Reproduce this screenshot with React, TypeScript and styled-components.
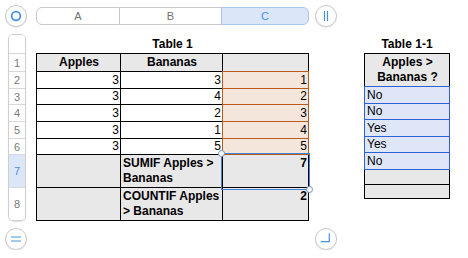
import React from "react";
import styled, { createGlobalStyle, css } from "styled-components";

const GlobalStyle = createGlobalStyle`
  body {
    margin: 0;
    background: #ffffff;
    font-family: "Liberation Sans", Arial, sans-serif;
    color: #000000;
  }
`;

const colors = {
  line: "#000000",
  head: "#e8e8e8",
  orangeFill: "#f5e6dc",
  orangeLine: "#b85a1e",
  blueFill: "#dee6f7",
  blueLine: "#2b62d3",
  select: "#3d84d8",
  chrome: "#c9c9c9",
  chromeText: "#707070",
  chromeBlue: "#4a90e2",
  chromeBlueFill: "#dbe7f9",
};

const Sheet = styled.div`
  display: grid;
  grid-template-columns: 22px 9px 273px 6px 22px 27px 86px;
  grid-template-rows: 22px 7px 187px 7px 22px;
  grid-template-areas:
    "tl . cols . tr . ."
    ". . . . . . ."
    "rows . t1 . . . t2"
    ". . . . . . ."
    "bl . . . br . .";
  padding: 5px 0 0 5px;
`;

const RoundButton = styled.div<{ $area: string }>`
  grid-area: ${(p) => p.$area};
  width: 22px;
  height: 22px;
  box-sizing: border-box;
  border: 1px solid ${colors.chrome};
  border-radius: 50%;
  background: #ffffff;
  box-shadow: 0 1px 1px rgba(0, 0, 0, 0.08);
  display: flex;
  align-items: center;
  justify-content: center;

  svg {
    display: block;
  }
`;

const ColumnBar = styled.div`
  grid-area: cols;
  align-self: start;
  margin-top: 2px;
  height: 18px;
  display: flex;
  font-size: 11px;
`;

const ColumnTab = styled.div<{ $width?: number; $pos: "first" | "mid" | "last"; $active?: boolean }>`
  box-sizing: border-box;
  height: 18px;
  flex: ${(p) => (p.$width ? `0 0 ${p.$width}px` : "1 1 auto")};
  display: flex;
  align-items: center;
  justify-content: center;
  color: ${colors.chromeText};
  background: #ffffff;
  border: 1px solid ${colors.chrome};
  ${(p) =>
    p.$pos === "first" &&
    css`
      border-radius: 6px 0 0 6px;
    `}
  ${(p) =>
    p.$pos === "mid" &&
    css`
      border-left: none;
    `}
  ${(p) =>
    p.$pos === "last" &&
    css`
      margin-left: -1px;
      border-radius: 0 6px 6px 0;
    `}
  ${(p) =>
    p.$active &&
    css`
      color: ${colors.chromeBlue};
      background: ${colors.chromeBlueFill};
      border-color: #a8c5ec;
    `}
`;

const RowHeader = styled.div`
  grid-area: rows;
  align-self: start;
  justify-self: start;
  margin-left: 3px;
  width: 18px;
  box-sizing: border-box;
  border: 1px solid #cfcfcf;
  border-radius: 5px;
  overflow: hidden;
  box-shadow: 0 1px 1px rgba(0, 0, 0, 0.12);
  display: flex;
  flex-direction: column;
  font-size: 11px;
`;

const RowLabel = styled.div<{ $h: number; $active?: boolean; $last?: boolean }>`
  box-sizing: border-box;
  height: ${(p) => p.$h}px;
  display: flex;
  align-items: center;
  justify-content: center;
  color: ${(p) => (p.$active ? colors.chromeBlue : "#7a7a7a")};
  background: ${(p) => (p.$active ? colors.chromeBlueFill : "#ffffff")};
  border-bottom: ${(p) => (p.$last ? "none" : "1px solid #d8d8d8")};
`;

const TableBlock = styled.div<{ $area: string }>`
  grid-area: ${(p) => p.$area};
  display: flex;
  flex-direction: column;
`;

const TableTitle = styled.div`
  height: 19px;
  line-height: 21px;
  text-align: center;
  font-size: 12px;
  font-weight: bold;
`;

const Grid = styled.div<{ $cols: string; $rows: string }>`
  position: relative;
  display: grid;
  grid-template-columns: ${(p) => p.$cols};
  grid-template-rows: ${(p) => p.$rows};
  padding: 1px 0 0 1px;
  font-size: 12px;
`;

type Tone = "plain" | "head" | "orange" | "blue";

const toneFill: Record<Tone, string> = {
  plain: "#ffffff",
  head: colors.head,
  orange: colors.orangeFill,
  blue: colors.blueFill,
};

const toneLine: Record<Tone, string> = {
  plain: colors.line,
  head: colors.line,
  orange: colors.orangeLine,
  blue: colors.blueLine,
};

const Cell = styled.div<{
  $tone?: Tone;
  $align?: "left" | "center" | "right";
  $bold?: boolean;
  $top?: boolean;
}>`
  margin: -1px 0 0 -1px;
  border: 1px solid ${(p) => toneLine[p.$tone || "plain"]};
  background: ${(p) => toneFill[p.$tone || "plain"]};
  display: flex;
  flex-direction: column;
  justify-content: ${(p) => (p.$top ? "flex-start" : "center")};
  text-align: ${(p) => p.$align || "right"};
  font-weight: ${(p) => (p.$bold ? "bold" : "normal")};
  line-height: 15px;
  padding: ${(p) => (p.$top ? "1px" : "0")} 1px 0 2px;
  overflow: hidden;
  ${(p) =>
    (p.$tone === "orange" || p.$tone === "blue") &&
    css`
      position: relative;
      z-index: 1;
    `}
`;

const Selection = styled.div`
  position: absolute;
  left: 185px;
  top: 100px;
  width: 89px;
  height: 37px;
  box-sizing: border-box;
  border: 1px solid ${colors.select};
  z-index: 2;
`;

const Handle = styled.span<{ $corner: "tl" | "br" }>`
  position: absolute;
  width: 7px;
  height: 7px;
  box-sizing: border-box;
  border-radius: 50%;
  background: #ffffff;
  border: 1px solid #6d8fbf;
  ${(p) =>
    p.$corner === "tl"
      ? css`
          left: -4px;
          top: -4px;
        `
      : css`
          right: -4px;
          bottom: -4px;
        `}
`;

const rowHeights = [18, 17, 16, 17, 17, 16, 33, 33];
const rowLabelHeights = [19, 18, 17, 16, 17, 17, 16, 33, 32];

const data = [
  [3, 3, 1],
  [3, 4, 2],
  [3, 2, 3],
  [3, 1, 4],
  [3, 5, 5],
];

const answers = ["No", "No", "Yes", "Yes", "No"];

export default function App() {
  const blue = colors.chromeBlue;

  return (
    <>
      <GlobalStyle />
      <Sheet>
        <RoundButton $area="tl">
          <svg width="20" height="20" viewBox="0 0 20 20">
            <circle cx="10" cy="10" r="4.3" fill="none" stroke={blue} strokeWidth="1.8" />
          </svg>
        </RoundButton>

        <ColumnBar>
          <ColumnTab $width={84} $pos="first">A</ColumnTab>
          <ColumnTab $width={102} $pos="mid">B</ColumnTab>
          <ColumnTab $pos="last" $active>C</ColumnTab>
        </ColumnBar>

        <RoundButton $area="tr">
          <svg width="20" height="20" viewBox="0 0 20 20">
            <path d="M8.5 5 V15 M11.5 5 V15" stroke={blue} strokeWidth="1.2" fill="none" />
          </svg>
        </RoundButton>

        <RowHeader>
          {rowLabelHeights.map((h, i) => (
            <RowLabel key={i} $h={h} $active={i === 7} $last={i === rowLabelHeights.length - 1}>
              {i === 0 ? "" : i}
            </RowLabel>
          ))}
        </RowHeader>

        <TableBlock $area="t1">
          <TableTitle>Table 1</TableTitle>
          <Grid $cols="84px 102px 86px" $rows={rowHeights.map((h) => `${h}px`).join(" ")}>
            <Cell $tone="head" $align="center" $bold>Apples</Cell>
            <Cell $tone="head" $align="center" $bold>Bananas</Cell>
            <Cell $tone="head" />
            {data.map((row, r) => (
              <React.Fragment key={r}>
                <Cell>{row[0]}</Cell>
                <Cell>{row[1]}</Cell>
                <Cell $tone="orange">{row[2]}</Cell>
              </React.Fragment>
            ))}
            <Cell $tone="head" />
            <Cell $tone="head" $align="left" $bold $top>SUMIF Apples &gt; Bananas</Cell>
            <Cell $tone="head" $bold $top>7</Cell>
            <Cell $tone="head" />
            <Cell $tone="head" $align="left" $bold $top>COUNTIF Apples &gt; Bananas</Cell>
            <Cell $tone="head" $bold $top>2</Cell>
            <Selection>
              <Handle $corner="tl" />
              <Handle $corner="br" />
            </Selection>
          </Grid>
        </TableBlock>

        <TableBlock $area="t2">
          <TableTitle>Table 1-1</TableTitle>
          <Grid $cols="85px" $rows="33px 17px 16px 17px 16px 17px 15px 14px">
            <Cell $tone="head" $align="center" $bold>Apples &gt; Bananas ?</Cell>
            {answers.map((a, i) => (
              <Cell key={i} $tone="blue" $align="left">{a}</Cell>
            ))}
            <Cell $tone="head" />
            <Cell $tone="head" />
          </Grid>
        </TableBlock>

        <RoundButton $area="bl">
          <svg width="20" height="20" viewBox="0 0 20 20">
            <path d="M5 8 H15 M5 12 H15" stroke={blue} strokeWidth="1.2" fill="none" />
          </svg>
        </RoundButton>

        <RoundButton $area="br">
          <svg width="20" height="20" viewBox="0 0 20 20">
            <path d="M4.7 12.6 H13.3 V4.3" stroke={blue} strokeWidth="1.2" fill="none" />
          </svg>
        </RoundButton>
      </Sheet>
    </>
  );
}
